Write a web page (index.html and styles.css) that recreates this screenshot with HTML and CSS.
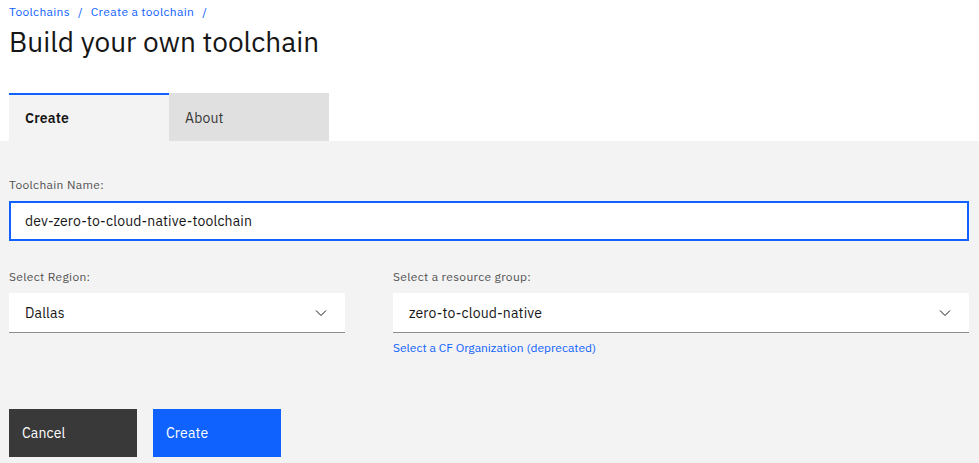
FILE: index.html
```html
<!DOCTYPE html>
<html lang="en">
<head>
<meta charset="utf-8">
<title>Build your own toolchain</title>
<link rel="stylesheet" href="styles.css">
</head>
<body>
<header class="page-header">
  <nav class="breadcrumb">
    <a href="#">Toolchains</a><span class="sep">/</span><a href="#">Create a toolchain</a><span class="sep">/</span>
  </nav>
  <h1 class="title">Build your own toolchain</h1>
</header>
<div class="tabs">
  <div class="tab tab-active">Create</div>
  <div class="tab">About</div>
</div>
<main class="panel">
  <div class="field">
    <label class="label">Toolchain Name:</label>
    <div class="text-input">dev-zero-to-cloud-native-toolchain</div>
  </div>
  <div class="row">
    <div class="field">
      <label class="label">Select Region:</label>
      <div class="select">
        <span>Dallas</span>
        <svg class="chev" width="16" height="16" viewBox="0 0 16 16"><path d="M3 5.5 L8 10.5 L13 5.5" fill="none" stroke="#161616" stroke-width="1"/></svg>
      </div>
    </div>
    <div class="field">
      <label class="label">Select a resource group:</label>
      <div class="select">
        <span>zero-to-cloud-native</span>
        <svg class="chev" width="16" height="16" viewBox="0 0 16 16"><path d="M3 5.5 L8 10.5 L13 5.5" fill="none" stroke="#161616" stroke-width="1"/></svg>
      </div>
      <a class="link" href="#">Select a CF Organization (deprecated)</a>
    </div>
  </div>
  <div class="actions">
    <button class="btn btn-secondary">Cancel</button>
    <button class="btn btn-primary">Create</button>
  </div>
</main>
</body>
</html>
```
FILE: styles.css
```css
* { box-sizing: border-box; }
html, body { margin: 0; padding: 0; }
body {
  font-family: "IBM Plex Sans", "Noto Sans", "Liberation Sans", sans-serif;
  color: #161616;
  background: #ffffff;
  height: 463px;
  display: flex;
  flex-direction: column;
}
.page-header { padding: 4px 9px 0; }
.breadcrumb { font-size: 12px; line-height: 16px; letter-spacing: 0.32px; }
.breadcrumb a { color: #0f62fe; text-decoration: none; }
.breadcrumb .sep { color: #0f62fe; margin: 0 8px; }
.title {
  margin: 4px 0 0;
  font-size: 28px;
  line-height: 36px;
  font-weight: 400;
  color: #161616;
}
.tabs { display: flex; margin: 33px 0 0 9px; }
.tab {
  width: 160px;
  height: 48px;
  display: flex;
  align-items: center;
  padding: 0 16px 0;
  font-size: 14px;
  letter-spacing: 0.16px;
  background: #e0e0e0;
  color: #393939;
  border-top: 2px solid transparent;
}
.tab-active {
  background: #f3f3f3;
  border-top-color: #0f62fe;
  font-weight: 600;
  color: #161616;
}
.panel {
  flex: 1;
  background: #f3f3f3;
  padding: 36px 10px 0 9px;
}
.field { display: flex; flex-direction: column; }
.label {
  font-size: 12px;
  line-height: 16px;
  letter-spacing: 0.32px;
  color: #525252;
  margin-bottom: 8px;
}
.text-input {
  height: 40px;
  background: #ffffff;
  border: 2px solid #0f62fe;
  padding: 0 14px;
  display: flex;
  align-items: center;
  font-size: 14px;
  letter-spacing: 0.16px;
}
.row {
  display: grid;
  grid-template-columns: 336px 1fr;
  column-gap: 48px;
  margin-top: 28px;
}
.select {
  height: 40px;
  background: #ffffff;
  border-bottom: 1px solid #8d8d8d;
  padding: 0 16px;
  display: flex;
  align-items: center;
  justify-content: space-between;
  font-size: 14px;
  letter-spacing: 0.16px;
}
.chev { display: block; }
.link {
  margin-top: 7px;
  font-size: 12px;
  line-height: 16px;
  color: #0f62fe;
  text-decoration: none;
}
.actions { display: flex; gap: 16px; margin-top: 53px; }
.btn {
  width: 128px;
  height: 48px;
  border: none;
  text-align: left;
  padding: 0 13px 0;
  font-family: inherit;
  font-size: 14px;
  letter-spacing: 0.16px;
  color: #ffffff;
}
.btn-secondary { background: #393939; }
.btn-primary { background: #0f62fe; }
```
